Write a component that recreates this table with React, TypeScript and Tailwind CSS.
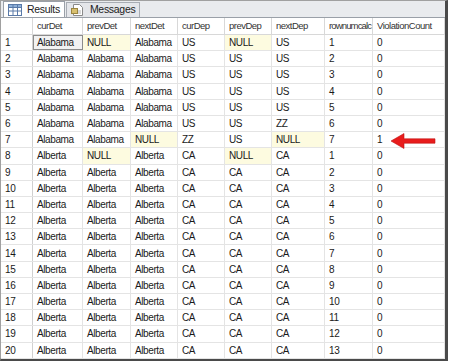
import React from 'react'

const cols = [
  { key: 'curDet', w: 'w-[50px]', t: 'tracking-[-0.5px]' },
  { key: 'prevDet', w: 'w-[48px]', t: 'tracking-[-0.5px]' },
  { key: 'nextDet', w: 'w-[47px]', t: 'tracking-[-0.5px]' },
  { key: 'curDep', w: 'w-[47px]', t: 'tracking-[-0.5px]' },
  { key: 'prevDep', w: 'w-[47px]', t: 'tracking-[-0.5px]' },
  { key: 'nextDep', w: 'w-[53px]', t: 'tracking-[-0.5px]' },
  { key: 'rownumcalc', w: 'w-[48px]', t: 'tracking-[-0.85px]' },
  { key: 'ViolationCount', w: 'flex-1', t: 'tracking-[-0.5px]' },
]

type Row = string[]

const rows: Row[] = [
  ['Alabama', 'NULL', 'Alabama', 'US', 'NULL', 'US', '1', '0'],
  ['Alabama', 'Alabama', 'Alabama', 'US', 'US', 'US', '2', '0'],
  ['Alabama', 'Alabama', 'Alabama', 'US', 'US', 'US', '3', '0'],
  ['Alabama', 'Alabama', 'Alabama', 'US', 'US', 'US', '4', '0'],
  ['Alabama', 'Alabama', 'Alabama', 'US', 'US', 'US', '5', '0'],
  ['Alabama', 'Alabama', 'Alabama', 'US', 'US', 'ZZ', '6', '0'],
  ['Alabama', 'Alabama', 'NULL', 'ZZ', 'US', 'NULL', '7', '1'],
  ['Alberta', 'NULL', 'Alberta', 'CA', 'NULL', 'CA', '1', '0'],
  ...Array.from({ length: 12 }, (_, i) => ['Alberta', 'Alberta', 'Alberta', 'CA', 'CA', 'CA', String(i + 2), '0']),
]

function GridIcon() {
  return (
    <svg width="14" height="12" viewBox="0 0 14 12">
      <rect x="0.5" y="0.5" width="13" height="11" fill="#fff" stroke="#5a7aa8" />
      <rect x="0.5" y="0.5" width="13" height="3" fill="#8fb0d8" stroke="#5a7aa8" />
      <line x1="5" y1="0.5" x2="5" y2="11.5" stroke="#5a7aa8" />
      <line x1="9.5" y1="0.5" x2="9.5" y2="11.5" stroke="#5a7aa8" />
      <line x1="0.5" y1="7" x2="13.5" y2="7" stroke="#5a7aa8" />
    </svg>
  )
}

function MsgIcon() {
  return (
    <svg width="14" height="14" viewBox="0 0 14 14">
      <path d="M2.5 1.5h6l3 3v8h-9z" fill="#fff" stroke="#8a8a8a" />
      <rect x="0.5" y="5.5" width="6" height="5" fill="#d8c070" stroke="#9a8440" />
      <line x1="7" y1="8" x2="10" y2="8" stroke="#b0b0b0" />
      <line x1="7" y1="10" x2="10" y2="10" stroke="#b0b0b0" />
    </svg>
  )
}

export default function App() {
  return (
    <div className="w-[451px] h-[364px] bg-white overflow-hidden" style={{ fontFamily: '"Liberation Sans", Arial, sans-serif' }}>
      <div className="w-[448px] h-[361px] border border-[#a0a0a0] border-r-[3px] border-b-[3px] border-r-[#4a4a4a] border-b-[#4a4a4a] bg-white flex flex-col">
        {/* Tabs */}
        <div className="h-[17px] flex items-end bg-[#e9ebee] border-b border-[#9aa0a8] pl-[2px] gap-[1px]">
          <div className="h-[16px] px-[4px] flex items-center gap-[5px] bg-white border border-b-0 border-[#9aa0a8] text-[10.5px] tracking-[-0.3px] text-[#222]">
            <GridIcon />
            <span>Results</span>
          </div>
          <div className="h-[15px] px-[4px] flex items-center gap-[5px] bg-[#e4e6ea] border border-b-0 border-[#a8adb4] text-[10.5px] tracking-[-0.3px] text-[#222]">
            <MsgIcon />
            <span>Messages</span>
          </div>
        </div>

        {/* Grid */}
        <div className="flex-1 flex flex-col text-[10px] tracking-[-0.4px] text-[#1a1a1a] relative">
          <div className="h-[17px] flex border-b border-[#d8d8d8] bg-white">
            <div className="w-[32px] border-r border-[#d8d8d8]" />
            {cols.map((c) => (
              <div key={c.key} className={`${c.w} ${c.t} border-r border-[#d8d8d8] flex items-center pl-[4px] text-[#333] text-[9.5px] whitespace-nowrap`}>
                {c.key}
              </div>
            ))}
          </div>
          {rows.map((r, i) => (
            <div key={i} className="h-[16.2px] flex border-b border-[#e4e4e4]">
              <div className="w-[32px] border-r border-[#d0d0d0] flex items-center pl-[4px] bg-white">{i + 1}</div>
              {cols.map((c, j) => {
                const v = r[j]
                const isNull = v === 'NULL'
                const sel = i === 0 && j === 0
                return (
                  <div
                    key={c.key}
                    className={`${c.w} border-r border-[#e4e4e4] flex items-center pl-[4px] ${isNull ? 'bg-[#fdfbe0]' : ''} ${sel ? 'bg-[#f2f2f2] outline outline-1 outline-[#8c8c8c] -outline-offset-1' : ''}`}
                  >
                    {v}
                  </div>
                )
              })}
            </div>
          ))}

          {/* red arrow */}
          <svg className="absolute left-[388px] top-[113px]" width="50" height="20" viewBox="0 0 50 20">
            <path d="M2 10 L15 2.5 L15 7.8 L46 7.8 L46 12.2 L15 12.2 L15 17.5 Z" fill="#e81c1c" stroke="#c01010" strokeWidth="0.6" />
          </svg>
        </div>
      </div>
    </div>
  )
}
